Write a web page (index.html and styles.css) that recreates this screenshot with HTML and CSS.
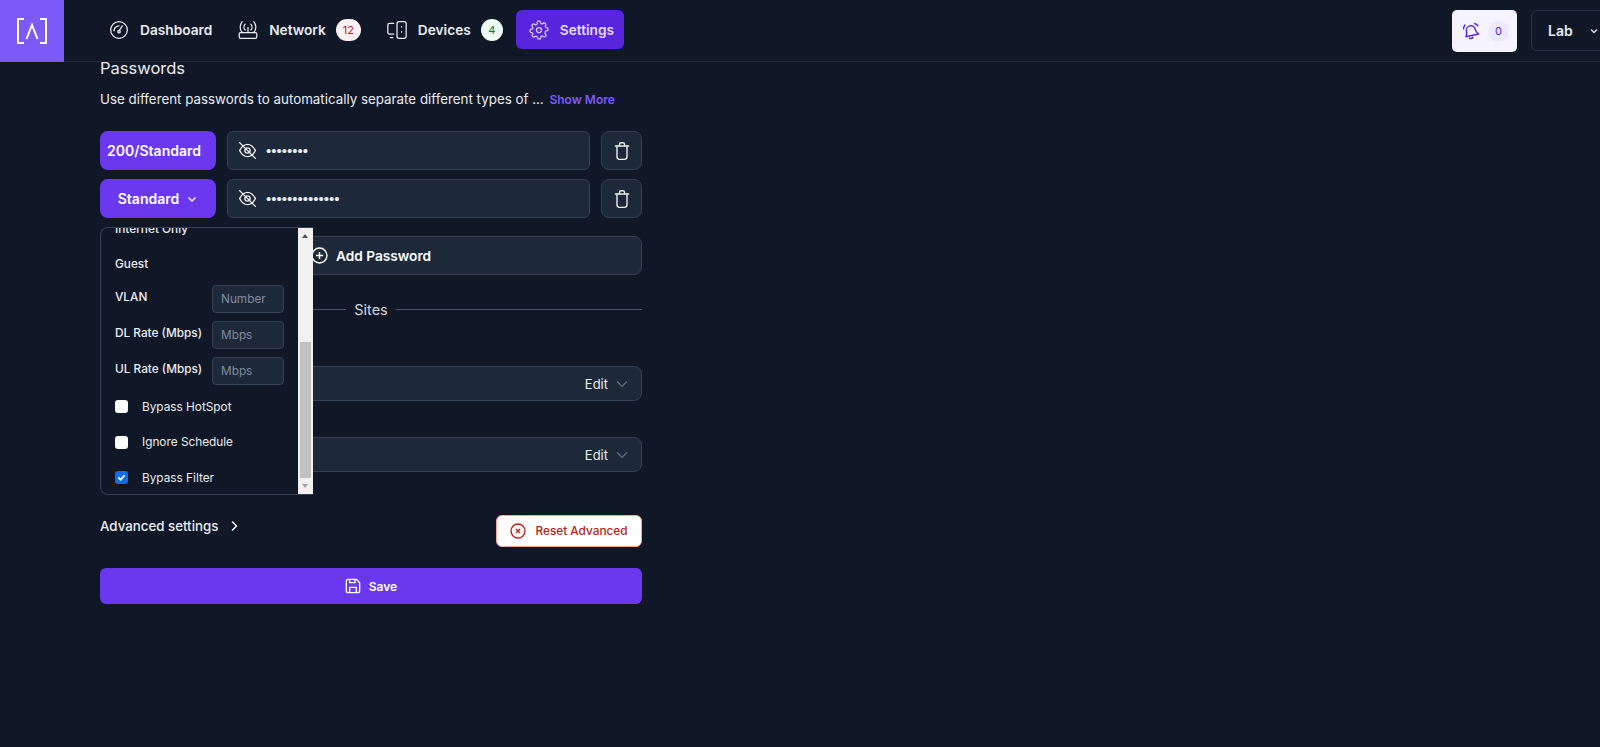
FILE: index.html
```html
<!DOCTYPE html>
<html lang="en">
<head>
    <meta charset="UTF-8">
    <meta name="viewport" content="width=device-width, initial-scale=1.0">
    <title>Settings</title>
    <link rel="stylesheet" href="styles.css">
</head>
<body>

<!-- Top bar -->
<header class="topbar">
    <div class="logo">
        <svg width="30" height="26" viewBox="0 0 30 26" fill="none" stroke="#fff" stroke-width="2">
            <path d="M7 1H1V25H7"/>
            <path d="M23 1H29V25H23"/>
            <path d="M9.500 21L15 7L20.500 21"/>
        </svg>
    </div>
    <nav class="nav">
        <a class="nav-item">
            <svg class="icon-nav" viewBox="0 0 24 24"><circle cx="12" cy="12" r="10"/><path d="M12 13L16 7"/><circle cx="12" cy="14" r="1.500"/><path d="M6 13a6 6 0 0 1 6-6"/></svg>
            Dashboard
        </a>
        <a class="nav-item">
            <svg class="icon-nav" viewBox="0 0 24 24"><path d="M3 15h18a1.500 1.500 0 0 1 1.500 1.500v4A1.500 1.500 0 0 1 21 22H3a1.500 1.500 0 0 1-1.500-1.500v-4A1.500 1.500 0 0 1 3 15z"/><path d="M12 15V9"/><path d="M8.500 12a5 5 0 0 1 0-7"/><path d="M15.500 12a5 5 0 0 0 0-7"/><path d="M5 15a10 10 0 0 1 0-13"/><path d="M19 15a10 10 0 0 0 0-13"/></svg>
            Network
            <span class="count count-red">12</span>
        </a>
        <a class="nav-item">
            <svg class="icon-nav" viewBox="0 0 24 24"><path d="M8 4H3a2 2 0 0 0-2 2v9a2 2 0 0 0 2 2h5"/><path d="M4 21h3"/><rect x="12" y="2" width="11" height="20" rx="2.500"/><path d="M17.500 8v.5M17.500 14v.5"/></svg>
            Devices
            <span class="count count-green">4</span>
        </a>
        <a class="nav-item active">
            <svg class="icon-nav" viewBox="0 0 24 24"><circle cx="12" cy="12" r="3"/><path d="M19.400 15a1.650 1.650 0 0 0 .33 1.820l.06.06a2 2 0 1 1-2.830 2.830l-.06-.06a1.650 1.650 0 0 0-2.800 1.170V21a2 2 0 1 1-4 0v-.09a1.650 1.650 0 0 0-2.800-1.110l-.06.06a2 2 0 1 1-2.830-2.830l.06-.06A1.650 1.650 0 0 0 3.090 15H3a2 2 0 1 1 0-4h.09a1.650 1.650 0 0 0 1.110-2.800l-.06-.06a2 2 0 1 1 2.830-2.830l.06.06A1.650 1.650 0 0 0 9.830 4.200V3a2 2 0 1 1 4 0v.09a1.650 1.650 0 0 0 2.800 1.110l.06-.06a2 2 0 1 1 2.830 2.830l-.06.06A1.650 1.650 0 0 0 20.910 9H21a2 2 0 1 1 0 4h-.09a1.650 1.650 0 0 0-1.510 2z"/></svg>
            Settings
        </a>
    </nav>
    <div class="topbar-right">
        <button class="bell-btn">
            <svg width="18" height="18" viewBox="0 0 24 24" fill="none" stroke="#5925dc" stroke-width="2" stroke-linecap="round" stroke-linejoin="round"><path d="M12 5a6 6 0 0 1 6 6c0 3.500 1 5 3 7H4c1.500-2 2-3.500 2-7a6 6 0 0 1 6-6z" transform="rotate(-12 12 12)"/><path d="M10 21.500a3 3 0 0 0 4.500-1"/><path d="M2 9a9 9 0 0 1 2-5"/><path d="M17 2a9 9 0 0 1 4 3"/></svg>
            <span class="bell-count">0</span>
        </button>
        <div class="site-select">
            Lab
            <svg width="10" height="10" viewBox="0 0 10 10" fill="none" stroke="#d0d5dd" stroke-width="1.500"><path d="M2 3.500L5 6.500L8 3.500"/></svg>
        </div>
    </div>
</header>

<main class="content">
    <div class="form">
        <h2 class="title">Passwords</h2>
        <p class="desc">Use different passwords to automatically separate different types of ... <a class="show-more">Show More</a></p>

        <div class="pass-row">
            <button class="type-btn type-fixed">200/Standard</button>
            <div class="field">
                <svg class="icon-eye" viewBox="0 0 24 24"><path d="M3 12s3.500-7 9-7 9 7 9 7-3.500 7-9 7-9-7-9-7z"/><circle cx="12" cy="12" r="3"/><path d="M3 3l18 18"/></svg>
                <span class="dots">••••••••</span>
            </div>
            <button class="icon-btn">
                <svg class="icon-trash" viewBox="0 0 24 24"><path d="M4 6h16"/><path d="M9 6V4a2 2 0 0 1 2-2h2a2 2 0 0 1 2 2v2"/><path d="M6 6v13a3 3 0 0 0 3 3h6a3 3 0 0 0 3-3V6"/></svg>
            </button>
        </div>

        <div class="pass-row">
            <div class="type-select">
                <button class="type-btn">
                    Standard
                    <svg width="12" height="12" viewBox="0 0 12 12" fill="none" stroke="#fff" stroke-width="1.300"><path d="M2.500 4.500L6 8L9.500 4.500"/></svg>
                </button>

                <!-- Open dropdown, scrolled down -->
                <div class="menu">
                    <div class="menu-list">
                        <div class="menu-scrolled">
                            <div class="menu-row">Internet Only</div>
                            <div class="menu-row">Guest</div>
                            <div class="menu-row input-row"><span>VLAN</span> <span class="mini-input">Number</span></div>
                            <div class="menu-row input-row"><span>DL Rate (Mbps)</span> <span class="mini-input">Mbps</span></div>
                            <div class="menu-row input-row"><span>UL Rate (Mbps)</span> <span class="mini-input">Mbps</span></div>
                            <div class="menu-row check-row"><span class="check"></span>Bypass HotSpot</div>
                            <div class="menu-row check-row"><span class="check"></span>Ignore Schedule</div>
                            <div class="menu-row check-row">
                                <span class="check checked">
                                    <svg width="9" height="9" viewBox="0 0 10 10" fill="none" stroke="#fff" stroke-width="2"><path d="M1.500 5L4 7.500L8.500 2.500"/></svg>
                                </span>
                                Bypass Filter
                            </div>
                        </div>
                    </div>
                    <div class="scrollbar">
                        <span class="arrow-up"></span>
                        <span class="thumb"></span>
                        <span class="arrow-down"></span>
                    </div>
                </div>
            </div>
            <div class="field">
                <svg class="icon-eye" viewBox="0 0 24 24"><path d="M3 12s3.500-7 9-7 9 7 9 7-3.500 7-9 7-9-7-9-7z"/><circle cx="12" cy="12" r="3"/><path d="M3 3l18 18"/></svg>
                <span class="dots">••••••••••••••</span>
            </div>
            <button class="icon-btn">
                <svg class="icon-trash" viewBox="0 0 24 24"><path d="M4 6h16"/><path d="M9 6V4a2 2 0 0 1 2-2h2a2 2 0 0 1 2 2v2"/><path d="M6 6v13a3 3 0 0 0 3 3h6a3 3 0 0 0 3-3V6"/></svg>
            </button>
        </div>

        <button class="add-btn">
            <svg width="17" height="17" viewBox="0 0 24 24" fill="none" stroke="#fff" stroke-width="2"><circle cx="12" cy="12" r="10.500"/><path d="M12 7v10M7 12h10"/></svg>
            Add Password
        </button>

        <div class="divider"><span>Sites</span></div>

        <div class="edit-row first">Edit <svg class="icon-chev" viewBox="0 0 14 14"><path d="M2 4.500L7 9.500L12 4.500"/></svg></div>
        <div class="edit-row second">Edit <svg class="icon-chev" viewBox="0 0 14 14"><path d="M2 4.500L7 9.500L12 4.500"/></svg></div>

        <div class="advanced">
            <div class="advanced-toggle">
                Advanced settings
                <svg width="12" height="12" viewBox="0 0 12 12" fill="none" stroke="#fff" stroke-width="1.400"><path d="M4 1.500L8.500 6L4 10.500"/></svg>
            </div>
            <button class="reset-btn">
                <svg width="16" height="16" viewBox="0 0 24 24" fill="none" stroke="#b42318" stroke-width="2"><circle cx="12" cy="12" r="10.500"/><path d="M9 9l6 6M15 9l-6 6"/></svg>
                Reset Advanced
            </button>
        </div>

        <button class="save-btn">
            <svg width="16" height="16" viewBox="0 0 24 24" fill="none" stroke="#fff" stroke-width="2" stroke-linejoin="round"><path d="M2 5a3 3 0 0 1 3-3h12l5 5v12a3 3 0 0 1-3 3H5a3 3 0 0 1-3-3z"/><path d="M7 2v5h8V2"/><path d="M7 22v-8h10v8"/></svg>
            Save
        </button>
    </div>
</main>

</body>
</html>
```

FILE: styles.css
```css
* {
    box-sizing: border-box;
    margin: 0;
    padding: 0;
}

body {
    font-family: Inter, 'Liberation Sans', sans-serif;
    background-color: #101828;
    color: #fff;
    height: 100vh;
    overflow: hidden;
}

button {
    font-family: inherit;
    color: inherit;
    border: none;
    cursor: pointer;
}

/* Top bar */
.topbar {
    display: flex;
    align-items: flex-start;
    height: 62px;
    border-bottom: 1px solid #1d2939;
}

.logo {
    width: 64px;
    height: 62px;
    background-color: #7a5af8;
    display: flex;
    align-items: center;
    justify-content: center;
    flex-shrink: 0;
}

.nav {
    display: flex;
    align-items: center;
    margin-left: 32px;
    margin-top: 10px;
}

.nav-item {
    display: flex;
    align-items: center;
    gap: 11px;
    height: 39px;
    padding: 0 13px;
    border-radius: 6px;
    font-size: 13.700px;
    font-weight: 600;
    color: #eaecf0;
}

.nav-item.active {
    padding-right: 10px;
    background-color: #5925dc;
    color: #e4dcff;
}

.icon-nav {
    width: 20px;
    height: 20px;
    fill: none;
    stroke: #eaecf0;
    stroke-width: 1.500;
    stroke-linecap: round;
    stroke-linejoin: round;
    flex-shrink: 0;
}

.active .icon-nav {
    stroke: #d9d0ff;
}

.count {
    display: flex;
    align-items: center;
    justify-content: center;
    height: 22px;
    margin-left: -1px;
    border-radius: 11px;
    font-size: 11px;
    font-weight: 400;
}

.count-red {
    width: 25px;
    background-color: #fef3f2;
    color: #b42318;
}

.count-green {
    width: 22px;
    background-color: #ecfdf3;
    color: #027a48;
}

.topbar-right {
    margin-left: auto;
    margin-top: 10px;
    margin-right: -12px;
    display: flex;
    gap: 14px;
}

.bell-btn {
    display: flex;
    align-items: center;
    gap: 8px;
    width: 65px;
    height: 42px;
    padding-left: 10px;
    background-color: #f4f3ff;
    border-radius: 5px;
}

.bell-count {
    display: flex;
    align-items: center;
    justify-content: center;
    width: 21px;
    height: 21px;
    border-radius: 50%;
    background-color: #ebe9fe;
    color: #5925dc;
    font-size: 11px;
}

.site-select {
    display: flex;
    align-items: center;
    gap: 16px;
    width: 81px;
    height: 41px;
    padding-left: 16px;
    border: 1px solid #263245;
    border-radius: 6px;
    font-size: 14px;
    font-weight: 600;
    color: #eaecf0;
}

/* Main form */
.content {
    padding-left: 100px;
}

.form {
    width: 542px;
}

.title {
    font-size: 16.500px;
    line-height: 12px;
    font-weight: 400;
    color: #eaecf0;
    margin-bottom: 15px;
}

.desc {
    font-size: 13.350px;
    line-height: 20px;
    color: #eaecf0;
    margin-bottom: 21px;
}

.show-more {
    margin-left: 2px;
    color: #7a5af8;
    font-weight: 600;
    font-size: 12px;
}

.pass-row {
    display: flex;
    gap: 11px;
    margin-bottom: 9px;
}

.type-select {
    position: relative;
}

.type-btn {
    display: flex;
    align-items: center;
    justify-content: center;
    gap: 7px;
    width: 116px;
    height: 39px;
    background-color: #6938ef;
    border-radius: 8px;
    font-size: 14px;
    font-weight: 600;
    white-space: nowrap;
}

.type-btn.type-fixed {
    justify-content: flex-start;
    padding-left: 7px;
}

.field {
    flex: 1;
    display: flex;
    align-items: center;
    gap: 8px;
    height: 39px;
    padding-left: 9px;
    background-color: #1d2939;
    border: 1px solid #344054;
    border-radius: 6px;
}

.icon-eye {
    width: 21px;
    height: 21px;
    fill: none;
    stroke: #eaecf0;
    stroke-width: 1.600;
    stroke-linecap: round;
    stroke-linejoin: round;
}

.dots {
    font-family: 'Liberation Sans', sans-serif;
    font-size: 15px;
    color: #eaecf0;
}

.icon-btn {
    display: flex;
    align-items: center;
    justify-content: center;
    width: 41px;
    height: 39px;
    background-color: #1d2939;
    border: 1px solid #344054;
    border-radius: 8px;
}

.icon-trash {
    width: 20px;
    height: 20px;
    fill: none;
    stroke: #eaecf0;
    stroke-width: 1.700;
    stroke-linecap: round;
    stroke-linejoin: round;
}

.add-btn {
    display: flex;
    align-items: center;
    justify-content: center;
    gap: 8px;
    width: 100%;
    height: 39px;
    margin-top: 18px;
    background-color: #1d2939;
    border: 1px solid #344054;
    border-radius: 8px;
    font-size: 13.700px;
    font-weight: 600;
}

.divider {
    display: flex;
    align-items: center;
    gap: 8px;
    height: 20px;
    margin-top: 24px;
    font-size: 14.500px;
    color: #d0d5dd;
}

.divider::before,
.divider::after {
    content: "";
    flex: 1;
    height: 1px;
    background-color: #475467;
}

.edit-row {
    display: flex;
    align-items: center;
    justify-content: flex-end;
    gap: 7px;
    height: 35px;
    padding-right: 12px;
    background-color: #1d2939;
    border: 1px solid #344054;
    border-radius: 8px;
    font-size: 13px;
    color: #eaecf0;
}

.edit-row.first {
    margin-top: 47px;
}

.edit-row.second {
    margin-top: 36px;
}

.icon-chev {
    width: 14px;
    height: 14px;
    fill: none;
    stroke: #667085;
    stroke-width: 1.200;
}

.advanced {
    display: flex;
    justify-content: space-between;
    margin-top: 43px;
}

.advanced-toggle {
    display: flex;
    align-items: center;
    gap: 10px;
    height: 22px;
    font-size: 13.300px;
    font-weight: 500;
    color: #eaecf0;
}

.reset-btn {
    display: flex;
    align-items: center;
    justify-content: center;
    gap: 9px;
    width: 146px;
    height: 32px;
    background-color: #fff;
    border: 1px solid #fda29b;
    border-radius: 6px;
    color: #b42318;
    font-size: 11.800px;
    font-weight: 500;
}

.save-btn {
    display: flex;
    align-items: center;
    justify-content: center;
    gap: 8px;
    width: 100%;
    height: 36px;
    margin-top: 21px;
    background-color: #6938ef;
    border-radius: 6px;
    font-size: 12px;
    font-weight: 600;
}

/* Dropdown */
.menu {
    position: absolute;
    top: calc(100% + 9px);
    left: 0;
    z-index: 5;
    display: flex;
    width: 213px;
    height: 268px;
    background-color: #101828;
    border: 1px solid #344054;
    border-right: none;
    border-radius: 8px 0 0 8px;
}

.menu-list {
    flex: 1;
    overflow: hidden;
}

.menu-scrolled {
    margin-top: -17px;
    padding: 0 14px;
}

.menu-row {
    display: flex;
    align-items: center;
    justify-content: space-between;
    height: 35px;
    font-size: 11.800px;
    font-weight: 500;
    color: #eaecf0;
}

.input-row {
    height: 36px;
}

.input-row span:first-child {
    margin-bottom: 4px;
}

.check-row {
    justify-content: flex-start;
    gap: 14px;
    height: 35.500px;
    font-weight: 400;
}

.mini-input {
    display: flex;
    align-items: center;
    width: 72px;
    height: 28px;
    padding-left: 8px;
    background-color: #1d2939;
    border: 1px solid #344054;
    border-radius: 4px;
    font-weight: 400;
    color: #7d8aa0;
}

.check {
    display: flex;
    align-items: center;
    justify-content: center;
    width: 13px;
    height: 13px;
    background-color: #fff;
    border-radius: 3px;
}

.check.checked {
    background-color: #0b6cf5;
}

.scrollbar {
    position: relative;
    width: 15px;
    background-color: #f1f1f1;
    flex-shrink: 0;
}

.thumb {
    position: absolute;
    top: 114px;
    left: 2px;
    width: 11px;
    height: 136px;
    background-color: #c1c1c1;
}

.arrow-up {
    position: absolute;
    top: 6px;
    left: 4px;
    border: 3.500px solid transparent;
    border-top: none;
    border-bottom: 4px solid #505050;
}

.arrow-down {
    position: absolute;
    bottom: 6px;
    left: 4px;
    border: 3.500px solid transparent;
    border-bottom: none;
    border-top: 4px solid #a3a3a3;
}
```
